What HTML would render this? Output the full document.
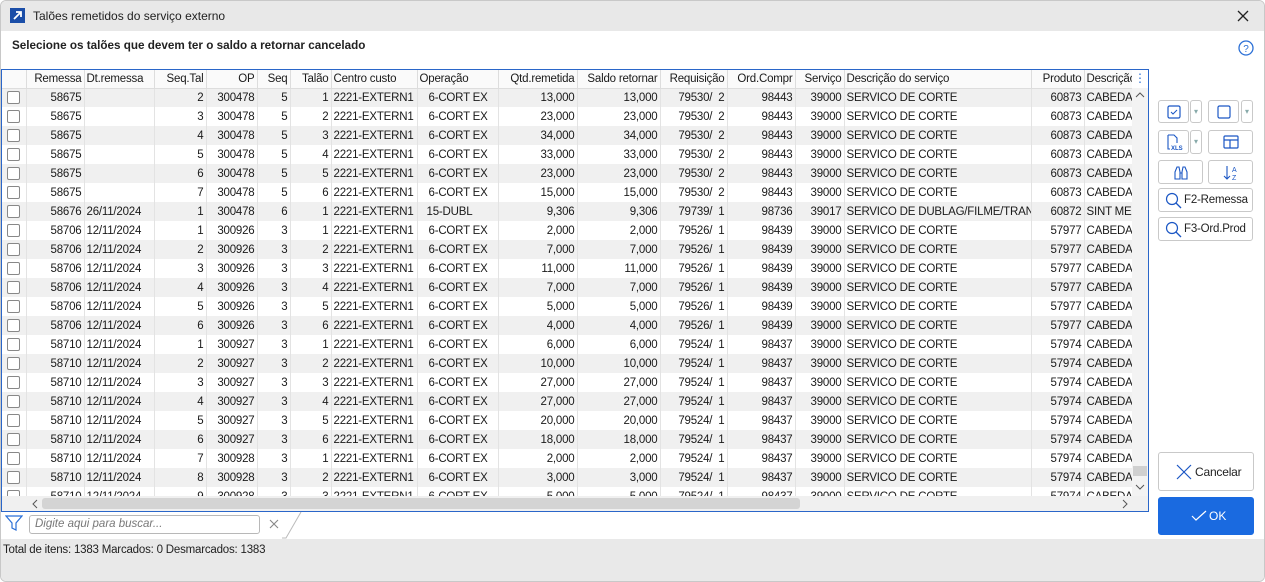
<!DOCTYPE html><html><head><meta charset="utf-8"><style>
*{box-sizing:border-box;margin:0;padding:0}
body{width:1265px;height:582px;overflow:hidden;background:#fff;font-family:"Liberation Sans",sans-serif;font-size:12px;color:#1a1a1a;position:relative}
.win{position:absolute;left:0;top:0;width:1265px;height:582px;border:1px solid #c8c8c8;border-radius:6px;overflow:hidden;background:#fff}
.title{position:absolute;left:0;top:0;width:100%;height:30px;background:#e8e8e8}
.title .t{position:absolute;left:32px;top:8px;font-size:12px;color:#222}
.ico{position:absolute;left:9px;top:7px;width:15px;height:15px;background:#1b4ea8}
.sub{position:absolute;left:11px;top:38px;font-weight:bold;font-size:11.7px;color:#222}
.grid{position:absolute;left:0;top:68px;width:1148px;height:443px;border:1px solid #2a66c9;overflow:hidden;background:#fff}
table{border-collapse:collapse;table-layout:fixed;position:absolute;left:0;top:0;width:1130px}
td,th{height:19px;border-right:1px solid #e3e3e3;padding:0 2px;white-space:nowrap;overflow:hidden;font-weight:normal;text-align:right;font-size:11.5px;letter-spacing:-0.2px}
th{height:18px;background:#fafafa;border-bottom:1px solid #ddd;border-right:1px solid #ddd}
.l{text-align:left}
tr:nth-child(even) td{background:#f0f0f0}
.cb{width:13px;height:13px;border:1px solid #888;border-radius:2px;background:#fff;margin-left:3px}
.op{text-align:left;padding-left:11px}
.hs{position:absolute;left:0;top:426px;width:1146px;height:15px;background:#f0f0f0}
.hs .th{position:absolute;left:40px;top:2px;width:758px;height:11px;background:#d4d4d4;border-radius:3px}
.vs{position:absolute;left:1130px;top:18px;width:16px;height:408px;background:#f3f3f3}
.vs .th{position:absolute;left:1px;top:378px;width:14px;height:10px;background:#d0d0d0}
.btn{position:absolute;border:1px solid #c9c9c9;border-radius:3px;background:#fff;color:#1a56c4}
.bt{color:#222;font-size:11.5px;white-space:nowrap;letter-spacing:-0.2px}
.status{position:absolute;left:0;top:538px;width:100%;height:44px;background:#e9e9e9}
</style></head><body><div class="win">
<div class="title"><div class="ico"><svg width="15" height="15"><path d="M4 11L11 4M6 4H11V9" stroke="#fff" stroke-width="1.8" fill="none"/></svg></div><div class="t">Talões remetidos do serviço externo</div>
<svg style="position:absolute;left:1236px;top:9px" width="12" height="12"><path d="M1 1L11 11M11 1L1 11" stroke="#222" stroke-width="1.3"/></svg></div>
<div class="sub">Selecione os talões que devem ter o saldo a retornar cancelado</div>
<svg style="position:absolute;left:1237px;top:39px" width="16" height="16"><circle cx="8" cy="8" r="7" stroke="#2a6fd6" stroke-width="1.3" fill="none"/><text x="8" y="12" font-size="10" text-anchor="middle" fill="#2a6fd6" font-family="Liberation Sans">?</text></svg>
<div class="grid">
<table>
<colgroup><col style="width:24px"><col style="width:58px"><col style="width:70px"><col style="width:52px"><col style="width:51px"><col style="width:33px"><col style="width:41px"><col style="width:86px"><col style="width:81px"><col style="width:79px"><col style="width:83px"><col style="width:67px"><col style="width:68px"><col style="width:49px"><col style="width:187px"><col style="width:53px"><col style="width:48px"></colgroup>
<tr><th></th><th>Remessa</th><th class="l">Dt.remessa</th><th>Seq.Tal</th><th>OP</th><th>Seq</th><th>Talão</th><th class="l">Centro custo</th><th class="l">Operação</th><th>Qtd.remetida</th><th>Saldo retornar</th><th>Requisição</th><th>Ord.Compr</th><th>Serviço</th><th class="l">Descrição do serviço</th><th>Produto</th><th class="l">Descrição</th></tr>
<tr><td><div class="cb"></div></td><td>58675</td><td class="l"></td><td>2</td><td>300478</td><td>5</td><td>1</td><td class="l">2221-EXTERN1</td><td class="op">6-CORT EX</td><td>13,000</td><td>13,000</td><td>79530/&nbsp; 2</td><td>98443</td><td>39000</td><td class="l">SERVICO DE CORTE</td><td>60873</td><td class="l">CABEDAL</td></tr>
<tr><td><div class="cb"></div></td><td>58675</td><td class="l"></td><td>3</td><td>300478</td><td>5</td><td>2</td><td class="l">2221-EXTERN1</td><td class="op">6-CORT EX</td><td>23,000</td><td>23,000</td><td>79530/&nbsp; 2</td><td>98443</td><td>39000</td><td class="l">SERVICO DE CORTE</td><td>60873</td><td class="l">CABEDAL</td></tr>
<tr><td><div class="cb"></div></td><td>58675</td><td class="l"></td><td>4</td><td>300478</td><td>5</td><td>3</td><td class="l">2221-EXTERN1</td><td class="op">6-CORT EX</td><td>34,000</td><td>34,000</td><td>79530/&nbsp; 2</td><td>98443</td><td>39000</td><td class="l">SERVICO DE CORTE</td><td>60873</td><td class="l">CABEDAL</td></tr>
<tr><td><div class="cb"></div></td><td>58675</td><td class="l"></td><td>5</td><td>300478</td><td>5</td><td>4</td><td class="l">2221-EXTERN1</td><td class="op">6-CORT EX</td><td>33,000</td><td>33,000</td><td>79530/&nbsp; 2</td><td>98443</td><td>39000</td><td class="l">SERVICO DE CORTE</td><td>60873</td><td class="l">CABEDAL</td></tr>
<tr><td><div class="cb"></div></td><td>58675</td><td class="l"></td><td>6</td><td>300478</td><td>5</td><td>5</td><td class="l">2221-EXTERN1</td><td class="op">6-CORT EX</td><td>23,000</td><td>23,000</td><td>79530/&nbsp; 2</td><td>98443</td><td>39000</td><td class="l">SERVICO DE CORTE</td><td>60873</td><td class="l">CABEDAL</td></tr>
<tr><td><div class="cb"></div></td><td>58675</td><td class="l"></td><td>7</td><td>300478</td><td>5</td><td>6</td><td class="l">2221-EXTERN1</td><td class="op">6-CORT EX</td><td>15,000</td><td>15,000</td><td>79530/&nbsp; 2</td><td>98443</td><td>39000</td><td class="l">SERVICO DE CORTE</td><td>60873</td><td class="l">CABEDAL</td></tr>
<tr><td><div class="cb"></div></td><td>58676</td><td class="l">26/11/2024</td><td>1</td><td>300478</td><td>6</td><td>1</td><td class="l">2221-EXTERN1</td><td class="op" style="padding-left:9px">15-DUBL</td><td>9,306</td><td>9,306</td><td>79739/&nbsp; 1</td><td>98736</td><td>39017</td><td class="l">SERVICO DE DUBLAG/FILME/TRANSF</td><td>60872</td><td class="l">SINT MED</td></tr>
<tr><td><div class="cb"></div></td><td>58706</td><td class="l">12/11/2024</td><td>1</td><td>300926</td><td>3</td><td>1</td><td class="l">2221-EXTERN1</td><td class="op">6-CORT EX</td><td>2,000</td><td>2,000</td><td>79526/&nbsp; 1</td><td>98439</td><td>39000</td><td class="l">SERVICO DE CORTE</td><td>57977</td><td class="l">CABEDAL</td></tr>
<tr><td><div class="cb"></div></td><td>58706</td><td class="l">12/11/2024</td><td>2</td><td>300926</td><td>3</td><td>2</td><td class="l">2221-EXTERN1</td><td class="op">6-CORT EX</td><td>7,000</td><td>7,000</td><td>79526/&nbsp; 1</td><td>98439</td><td>39000</td><td class="l">SERVICO DE CORTE</td><td>57977</td><td class="l">CABEDAL</td></tr>
<tr><td><div class="cb"></div></td><td>58706</td><td class="l">12/11/2024</td><td>3</td><td>300926</td><td>3</td><td>3</td><td class="l">2221-EXTERN1</td><td class="op">6-CORT EX</td><td>11,000</td><td>11,000</td><td>79526/&nbsp; 1</td><td>98439</td><td>39000</td><td class="l">SERVICO DE CORTE</td><td>57977</td><td class="l">CABEDAL</td></tr>
<tr><td><div class="cb"></div></td><td>58706</td><td class="l">12/11/2024</td><td>4</td><td>300926</td><td>3</td><td>4</td><td class="l">2221-EXTERN1</td><td class="op">6-CORT EX</td><td>7,000</td><td>7,000</td><td>79526/&nbsp; 1</td><td>98439</td><td>39000</td><td class="l">SERVICO DE CORTE</td><td>57977</td><td class="l">CABEDAL</td></tr>
<tr><td><div class="cb"></div></td><td>58706</td><td class="l">12/11/2024</td><td>5</td><td>300926</td><td>3</td><td>5</td><td class="l">2221-EXTERN1</td><td class="op">6-CORT EX</td><td>5,000</td><td>5,000</td><td>79526/&nbsp; 1</td><td>98439</td><td>39000</td><td class="l">SERVICO DE CORTE</td><td>57977</td><td class="l">CABEDAL</td></tr>
<tr><td><div class="cb"></div></td><td>58706</td><td class="l">12/11/2024</td><td>6</td><td>300926</td><td>3</td><td>6</td><td class="l">2221-EXTERN1</td><td class="op">6-CORT EX</td><td>4,000</td><td>4,000</td><td>79526/&nbsp; 1</td><td>98439</td><td>39000</td><td class="l">SERVICO DE CORTE</td><td>57977</td><td class="l">CABEDAL</td></tr>
<tr><td><div class="cb"></div></td><td>58710</td><td class="l">12/11/2024</td><td>1</td><td>300927</td><td>3</td><td>1</td><td class="l">2221-EXTERN1</td><td class="op">6-CORT EX</td><td>6,000</td><td>6,000</td><td>79524/&nbsp; 1</td><td>98437</td><td>39000</td><td class="l">SERVICO DE CORTE</td><td>57974</td><td class="l">CABEDAL</td></tr>
<tr><td><div class="cb"></div></td><td>58710</td><td class="l">12/11/2024</td><td>2</td><td>300927</td><td>3</td><td>2</td><td class="l">2221-EXTERN1</td><td class="op">6-CORT EX</td><td>10,000</td><td>10,000</td><td>79524/&nbsp; 1</td><td>98437</td><td>39000</td><td class="l">SERVICO DE CORTE</td><td>57974</td><td class="l">CABEDAL</td></tr>
<tr><td><div class="cb"></div></td><td>58710</td><td class="l">12/11/2024</td><td>3</td><td>300927</td><td>3</td><td>3</td><td class="l">2221-EXTERN1</td><td class="op">6-CORT EX</td><td>27,000</td><td>27,000</td><td>79524/&nbsp; 1</td><td>98437</td><td>39000</td><td class="l">SERVICO DE CORTE</td><td>57974</td><td class="l">CABEDAL</td></tr>
<tr><td><div class="cb"></div></td><td>58710</td><td class="l">12/11/2024</td><td>4</td><td>300927</td><td>3</td><td>4</td><td class="l">2221-EXTERN1</td><td class="op">6-CORT EX</td><td>27,000</td><td>27,000</td><td>79524/&nbsp; 1</td><td>98437</td><td>39000</td><td class="l">SERVICO DE CORTE</td><td>57974</td><td class="l">CABEDAL</td></tr>
<tr><td><div class="cb"></div></td><td>58710</td><td class="l">12/11/2024</td><td>5</td><td>300927</td><td>3</td><td>5</td><td class="l">2221-EXTERN1</td><td class="op">6-CORT EX</td><td>20,000</td><td>20,000</td><td>79524/&nbsp; 1</td><td>98437</td><td>39000</td><td class="l">SERVICO DE CORTE</td><td>57974</td><td class="l">CABEDAL</td></tr>
<tr><td><div class="cb"></div></td><td>58710</td><td class="l">12/11/2024</td><td>6</td><td>300927</td><td>3</td><td>6</td><td class="l">2221-EXTERN1</td><td class="op">6-CORT EX</td><td>18,000</td><td>18,000</td><td>79524/&nbsp; 1</td><td>98437</td><td>39000</td><td class="l">SERVICO DE CORTE</td><td>57974</td><td class="l">CABEDAL</td></tr>
<tr><td><div class="cb"></div></td><td>58710</td><td class="l">12/11/2024</td><td>7</td><td>300928</td><td>3</td><td>1</td><td class="l">2221-EXTERN1</td><td class="op">6-CORT EX</td><td>2,000</td><td>2,000</td><td>79524/&nbsp; 1</td><td>98437</td><td>39000</td><td class="l">SERVICO DE CORTE</td><td>57974</td><td class="l">CABEDAL</td></tr>
<tr><td><div class="cb"></div></td><td>58710</td><td class="l">12/11/2024</td><td>8</td><td>300928</td><td>3</td><td>2</td><td class="l">2221-EXTERN1</td><td class="op">6-CORT EX</td><td>3,000</td><td>3,000</td><td>79524/&nbsp; 1</td><td>98437</td><td>39000</td><td class="l">SERVICO DE CORTE</td><td>57974</td><td class="l">CABEDAL</td></tr>
<tr><td><div class="cb"></div></td><td>58710</td><td class="l">12/11/2024</td><td>9</td><td>300928</td><td>3</td><td>3</td><td class="l">2221-EXTERN1</td><td class="op">6-CORT EX</td><td>5,000</td><td>5,000</td><td>79524/&nbsp; 1</td><td>98437</td><td>39000</td><td class="l">SERVICO DE CORTE</td><td>57974</td><td class="l">CABEDAL</td></tr>
</table>
<div style="position:absolute;left:1130px;top:0;width:16px;height:18px;background:#fff;color:#2a6fd6;text-align:center;font-size:12px;line-height:17px">⋮</div>
<div class="vs"><div class="th"></div><svg style="position:absolute;left:3px;top:4px" width="10" height="6"><path d="M1 5L5 1L9 5" stroke="#555" fill="none"/></svg><svg style="position:absolute;left:3px;top:396px" width="10" height="6"><path d="M1 1L5 5L9 1" stroke="#555" fill="none"/></svg></div>
<div class="hs"><div class="th"></div><svg style="position:absolute;left:30px;top:3px" width="6" height="10"><path d="M5 1L1 5L5 9" stroke="#555" fill="none"/></svg><svg style="position:absolute;left:1120px;top:3px" width="6" height="10"><path d="M1 1L5 5L1 9" stroke="#555" fill="none"/></svg></div>
</div>
<svg style="position:absolute;left:4px;top:514px" width="18" height="17"><path d="M1 1H17L11 8V15L7 13V8Z" stroke="#2a6fd6" stroke-width="1.2" fill="none"/></svg>
<div style="position:absolute;left:28px;top:514px;width:231px;height:19px;border:1px solid #b8b8b8;border-radius:3px;font-style:italic;color:#777;padding:2px 5px;font-size:11.5px">Digite aqui para buscar...</div>
<svg style="position:absolute;left:268px;top:518px" width="10" height="10"><path d="M1 1L9 9M9 1L1 9" stroke="#888" stroke-width="1.1"/></svg>
<svg style="position:absolute;left:281px;top:510px" width="20" height="28"><path d="M0 27L4 27L19 1" stroke="#bbb" fill="none"/></svg>
<div class="status"></div>
<div style="position:absolute;left:2px;top:543px;font-size:11.5px;letter-spacing:-0.2px;color:#222">Total de itens: 1383 Marcados: 0 Desmarcados: 1383</div>
<div class="btn" style="left:1157px;top:99px;width:31px;height:23px"><svg style="position:absolute;left:8px;top:4px" width="14" height="14"><rect x="1" y="1" width="12" height="12" rx="1.5" stroke="#1a56c4" fill="none" stroke-width="1.2"/><path d="M4 7L6 9L10 5" stroke="#1a56c4" fill="none"/></svg></div>
<div class="btn" style="left:1189px;top:99px;width:12px;height:23px;color:#8aa;font-size:8px;text-align:center;line-height:21px">▾</div>
<div class="btn" style="left:1207px;top:99px;width:31px;height:23px"><svg style="position:absolute;left:8px;top:4px" width="14" height="14"><rect x="1" y="1" width="12" height="12" rx="1.5" stroke="#1a56c4" fill="none" stroke-width="1.2"/></svg></div>
<div class="btn" style="left:1240px;top:99px;width:12px;height:23px;color:#8aa;font-size:8px;text-align:center;line-height:21px">▾</div>
<div class="btn" style="left:1157px;top:129px;width:31px;height:24px"><svg style="position:absolute;left:7px;top:3px" width="18" height="18"><path d="M2 1H8L11 4V9M2 1V15H4" stroke="#1a56c4" fill="none" stroke-width="1.1"/><text x="5" y="16" font-size="6" font-weight="bold" fill="#1a56c4" font-family="Liberation Sans">XLS</text></svg></div>
<div class="btn" style="left:1189px;top:129px;width:12px;height:24px;color:#8aa;font-size:8px;text-align:center;line-height:22px">▾</div>
<div class="btn" style="left:1207px;top:129px;width:45px;height:24px"><svg style="position:absolute;left:14px;top:4px" width="16" height="15"><rect x="1" y="1" width="14" height="12" rx="1" stroke="#1a56c4" fill="none" stroke-width="1.2"/><path d="M1 5H15M7 5V13" stroke="#1a56c4" stroke-width="1.2"/></svg></div>
<div class="btn" style="left:1157px;top:159px;width:45px;height:24px"><svg style="position:absolute;left:14px;top:4px" width="16" height="15"><path d="M2 14V7L4 2H6L7 7V14ZM9 14V7L10 2H12L14 7V14ZM7 8H9" stroke="#1a56c4" fill="none" stroke-width="1.1"/></svg></div>
<div class="btn" style="left:1207px;top:159px;width:45px;height:24px"><svg style="position:absolute;left:14px;top:3px" width="18" height="18"><path d="M4 2V15M1 12L4 15L7 12" stroke="#1a56c4" fill="none" stroke-width="1.1"/><text x="9" y="8" font-size="7" fill="#1a56c4" font-family="Liberation Sans">A</text><text x="9" y="16" font-size="7" fill="#1a56c4" font-family="Liberation Sans">Z</text></svg></div>
<div class="btn bt" style="left:1157px;top:187px;width:95px;height:24px"><svg style="position:absolute;left:6px;top:3px" width="18" height="18"><circle cx="7" cy="7" r="5.5" stroke="#1a56c4" fill="none" stroke-width="1.2"/><path d="M11 11L16 16" stroke="#1a56c4" stroke-width="1.3"/></svg><span style="position:absolute;left:25px;top:5px">F2-Remessa</span></div>
<div class="btn bt" style="left:1157px;top:216px;width:95px;height:24px"><svg style="position:absolute;left:6px;top:3px" width="18" height="18"><circle cx="7" cy="7" r="5.5" stroke="#1a56c4" fill="none" stroke-width="1.2"/><path d="M11 11L16 16" stroke="#1a56c4" stroke-width="1.3"/></svg><span style="position:absolute;left:25px;top:5px">F3-Ord.Prod</span></div>
<div class="btn bt" style="left:1157px;top:451px;width:96px;height:39px"><svg style="position:absolute;left:17px;top:11px" width="16" height="16"><path d="M1 1L15 15M15 1L1 15" stroke="#1a56c4" stroke-width="1.2"/></svg><span style="position:absolute;left:36px;top:12px;font-size:12px">Cancelar</span></div>
<div class="btn" style="left:1157px;top:496px;width:96px;height:38px;background:#1a6ae0;border-color:#1a6ae0;color:#fff"><svg style="position:absolute;left:32px;top:12px" width="16" height="12"><path d="M1 6L5 10L15 1" stroke="#fff" stroke-width="1.2" fill="none"/></svg><span style="position:absolute;left:50px;top:11px;font-size:12px">OK</span></div>
</div></body></html>
